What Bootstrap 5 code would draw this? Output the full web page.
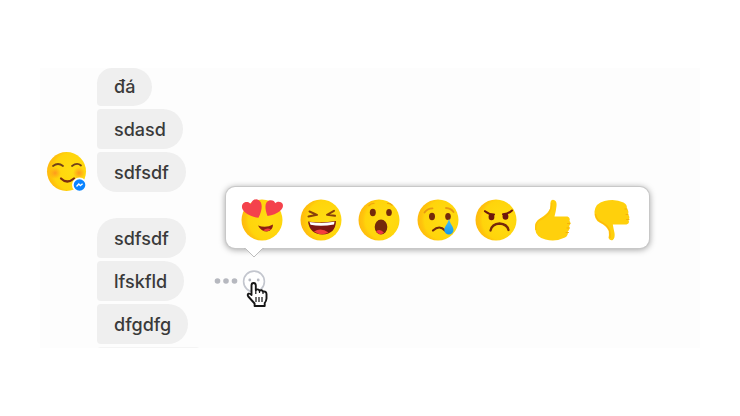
<!DOCTYPE html>
<html lang="vi">
<head>
<meta charset="utf-8">
<meta name="viewport" content="width=device-width, initial-scale=1">
<title>Messages</title>
<link href="https://cdn.jsdelivr.net/npm/bootstrap@5.3.0/dist/css/bootstrap.min.css" rel="stylesheet">
<style>
body { background: #fff; font-family: Inter, "Liberation Sans", sans-serif; }
.page { padding: 68px 40px; }
.chat { background: #fdfdfd; overflow: hidden; height: calc(100vh - 136px); min-height: 280px; }
.thread { gap: 26px; }
.group { gap: 7px; padding-left: 6px; }
.who { width: 44px; }
.avatar { width: 44px; height: 40px; overflow: visible; }
.msgs { gap: 3px; }
.bubble { height: 40px; padding: 0 17px; background: #efefef; color: #3a3a3a; font-size: 18px; font-weight: 500; line-height: 41px; border-radius: 4px 20px 20px 4px; }
.bubble.first { border-top-left-radius: 20px; }
.bubble.last { border-bottom-left-radius: 20px; }
.bubble.cut { height: 38px; line-height: 38px; border-radius: 16px 20px 20px 4px; }
.bubble.next { width: 103px; background: #f4f4f4; border-radius: 4px; }
.actions { gap: 4px; margin-left: 30px; }
.tool { border: 0; padding: 0; background: none; display: block; line-height: 0; }
.tool svg { display: block; overflow: visible; }
.picker { left: -16px; bottom: calc(100% + 21px); width: 423px; height: 61px; padding: 4px 15px 0; background: #fff; border-radius: 9px; box-shadow: 0 0 0 1px #c8c8c8, 0 1px 6px 1px rgba(0,0,0,.35); }
.tip { left: 18px; top: 100%; }
.hand { left: 4px; top: 12px; pointer-events: none; }
</style>
<script src="https://cdn.jsdelivr.net/npm/bootstrap@5.3.0/dist/js/bootstrap.bundle.min.js" defer></script>
</head>
<body>
<svg width="0" height="0" class="position-absolute" aria-hidden="true">
  <defs>
    <radialGradient id="face" cx=".66" cy=".5" r=".7">
      <stop offset="0" stop-color="#ffdd12"/><stop offset=".7" stop-color="#ffd40b"/><stop offset=".8" stop-color="#ffc40c"/><stop offset="1" stop-color="#ffb40e"/>
    </radialGradient>
    <linearGradient id="tear" x2="0" y2="1"><stop offset="0" stop-color="#4cc3f5"/><stop offset="1" stop-color="#1397ea"/></linearGradient>
    <radialGradient id="blush"><stop offset="0" stop-color="#ff9a1c"/><stop offset="1" stop-color="#ff9a1c" stop-opacity="0"/></radialGradient>
  </defs>
</svg>
<div class="page">
  <main class="chat">
    <div class="thread d-flex flex-column">
      <section class="group d-flex align-items-end">
        <div class="who">
          <svg class="avatar d-block" viewBox="0 0 44 40" role="img" aria-label="Contact">
            <circle cx="20.500" cy="19.500" r="19.500" fill="url(#face)"/>
            <circle cx="9" cy="21" r="6" fill="url(#blush)"/><circle cx="33" cy="21" r="6" fill="url(#blush)"/>
            <path d="M7 14q5-4 10 0M26 14q5-4 9-.5" fill="none" stroke="#70401a" stroke-width="1.800" stroke-linecap="round"/>
            <path d="M15 26.500q6 6 13 0" fill="none" stroke="#7c2c10" stroke-width="2.200" stroke-linecap="round"/>
            <circle cx="33.500" cy="33" r="7.500" fill="#fdfdfd"/><circle cx="33.500" cy="33" r="5.800" fill="#0a84ff"/>
            <path d="M30.500 34.500l2.300-2.500 1.600 1.600 2.200-1.900" fill="none" stroke="#fff" stroke-width="1.300"/>
          </svg>
        </div>
        <div class="msgs d-flex flex-column align-items-start">
          <div class="bubble cut">đá</div>
          <div class="bubble">sdasd</div>
          <div class="bubble last">sdfsdf</div>
        </div>
      </section>
      <section class="group d-flex align-items-end">
        <div class="who"></div>
        <div class="msgs d-flex flex-column align-items-start">
          <div class="bubble first">sdfsdf</div>
          <div class="d-flex align-items-center">
            <div class="bubble">lfskfld</div>
            <div class="actions d-flex align-items-center">
              <button class="tool" type="button" aria-label="More">
                <svg width="24" height="22" viewBox="0 0 24 22" fill="#b6b8bf"><circle cx="3.500" cy="11" r="2.800"/><circle cx="12" cy="11" r="2.800"/><circle cx="20.500" cy="11" r="2.800"/></svg>
              </button>
              <div class="position-relative">
                <button class="tool" type="button" aria-label="React" aria-expanded="true">
                  <svg width="24" height="24" viewBox="0 0 24 24"><circle cx="12" cy="12.500" r="10.400" fill="#fff" stroke="#c3c6ce" stroke-width="1.600"/><circle cx="7.800" cy="11" r="1.400" fill="#b4b7c0"/><circle cx="16.200" cy="11" r="1.400" fill="#b4b7c0"/></svg>
                </button>
                <svg class="hand position-absolute" width="23" height="27" viewBox="0 0 23 27" aria-hidden="true">
                  <path d="M5.500 14V4.500Q5.500 2 7.600 2T9.800 4.500V9Q12 7.400 13.500 9.600 16 8.400 17 10.600 20.300 10 20.500 13V17.500Q20.300 20 18.700 22V25H8.600V22.500L2.300 15.500Q1 13.500 2.600 12.700 4 12.200 5.500 14Z" fill="#fff" stroke="#161616" stroke-width="1.900" stroke-linejoin="round"/>
                  <path d="M9.800 9v4M13.500 10v2M17 11v2M10 16v5M13 16v5M16 16v5" stroke="#161616" stroke-width="1.200"/>
                </svg>
                <div class="picker position-absolute d-flex align-items-center justify-content-between" role="group" aria-label="Reactions">
                  <button class="tool" type="button" aria-label="Love">
                    <svg width="42" height="42" viewBox="0 0 42 42"><circle cx="21" cy="21" r="20.500" fill="url(#face)"/>
                      <g fill="#f4424c"><path d="M17.500 18.800C10 18 3 14 1.200 9.500 0 5 3.500 2 7.500 3.200L9.800 5C11 1 14.500-.6 17.500.9c4.500 2.600 4 9.500 0 17.900Z"/><path d="M26.500 17C24 10 23 3.500 28 1.400 31.500.5 33.500 2 34.200 4.200 36 2.200 40 2 41.700 5 43.500 10 37 15.500 26.500 17Z"/></g>
                      <path d="M17 26.500Q25 29.500 32 25.500 32 31.500 26 32.500 20 32.500 17 26.500Z" fill="#8b1f13"/><path d="M22 31.500q4-3.500 8-1.200-3 3-8 1.200Z" fill="#ef3d3b"/></svg>
                  </button>
                  <button class="tool" type="button" aria-label="Haha">
                    <svg width="42" height="42" viewBox="0 0 42 42"><circle cx="21" cy="21" r="20.500" fill="url(#face)"/>
                      <path d="M9.500 12.500l7.500 3.300-8.500 1.800M34 11.800l-7 4 8 1" fill="none" stroke="#87410b" stroke-width="2" stroke-linecap="round" stroke-linejoin="round"/>
                      <path d="M8 22.500Q21 24.500 36 22 35.500 35 22.500 35.500 9.500 35 8 22.500Z" fill="#7d1712"/><path d="M9.500 23Q22 25 34.500 22.800L34 25.500Q21 28 10.500 25.800Z" fill="#fff"/><path d="M14 32.500q7-4.500 14.500 1-7 4-14.500-1Z" fill="#f5403d"/></svg>
                  </button>
                  <button class="tool" type="button" aria-label="Wow">
                    <svg width="42" height="42" viewBox="0 0 42 42"><circle cx="21" cy="21" r="20.500" fill="url(#face)"/>
                      <g fill="#74290b"><ellipse cx="14.800" cy="13.500" rx="3" ry="3.700"/><ellipse cx="31" cy="13.500" rx="2.800" ry="3.500"/><ellipse cx="23" cy="28" rx="6.300" ry="7.500"/></g>
                      <path d="M18 32.500q4-3.500 8 1.200-4 3.500-8-1.200Z" fill="#ef3545"/><path d="M10.500 7q3-3 6-2.500M29 4.500q3-.5 5.500 2" stroke="#f0a70b" stroke-width="1.200" fill="none"/></svg>
                  </button>
                  <button class="tool" type="button" aria-label="Sad">
                    <svg width="42" height="42" viewBox="0 0 42 42"><circle cx="21" cy="21" r="20.500" fill="url(#face)"/>
                      <path d="M7.500 13.500q2.500-4 8-4.200M29 9q5 .3 7.500 4" stroke="#e59812" stroke-width="1.800" fill="none" stroke-linecap="round"/>
                      <ellipse cx="15" cy="17.500" rx="3" ry="3.700" fill="#74290b"/><ellipse cx="31" cy="17.500" rx="2.800" ry="3.500" fill="#74290b"/>
                      <path d="M16 31.500q6.500-6 12 0" fill="none" stroke="#74290b" stroke-width="2.200" stroke-linecap="round"/><path d="M32 19.500C33 25 36.500 27.500 36.500 31a4.500 4.500 0 0 1-9.200 0C27.300 27.500 31 25 32 19.500Z" fill="url(#tear)"/></svg>
                  </button>
                  <button class="tool" type="button" aria-label="Angry">
                    <svg width="42" height="42" viewBox="0 0 42 42"><circle cx="21" cy="21" r="20.500" fill="url(#face)"/>
                      <ellipse cx="16.500" cy="18" rx="2.900" ry="3.200" fill="#6d170d"/><ellipse cx="30.500" cy="17.500" rx="2.900" ry="3.200" fill="#6d170d"/><path d="M10 12.200Q14 15.500 19 15.500M37 11.500Q33.500 15 28 15.200" stroke="#6d170d" stroke-width="2.100" fill="none" stroke-linecap="round"/>
                      <path d="M15.500 31.500Q17 25 24.500 24.500 32 25 33.500 31" fill="none" stroke="#74290b" stroke-width="2.300" stroke-linecap="round"/></svg>
                  </button>
                  <button class="tool" type="button" aria-label="Like">
                    <svg width="42" height="42" viewBox="0 0 42 42"><path d="M16.500 3Q17.500 0 20.500 1.200 23 2.500 22.500 7 22 12 20.500 17.500H33.500Q36.500 18.500 35.500 22 37.500 24 35.200 27 36 30.500 33.800 32.500 34.500 36.500 31 38.500 22 43 11.500 40.500 2 38.500 1 29.500.5 22.500 6 19.500 13 15.500 16 10 17 6 16.500 3Z" fill="#ffd00c"/><path d="M17.500 4Q18 9 15 14 10 19.500 5.500 21 1 24 2 31" fill="none" stroke="#ffc20a" stroke-width="1.500"/><path d="M33.500 24.500h2.500M33 29h2.500M32 33.500h2.500" stroke="#f5af08" fill="none" stroke-linecap="round"/></svg>
                  </button>
                  <button class="tool" type="button" aria-label="Dislike">
                    <svg width="42" height="42" viewBox="0 0 42 42"><path d="M16.500 39Q18 42 20.800 41 23.300 39 22.500 34 21.500 29.500 20.800 25.500H34.500Q38 24.500 36.500 21 38.500 18 36 15.500 37.200 12 34.800 9.500 35.500 5.500 31.500 3.500 23-.8 12.500 2 3.500 4 2.500 12.500 2 20.500 7.500 23.500 14.500 26.500 16.700 32 17.300 36 16.500 39Z" fill="#ffd00c"/><path d="M3.500 15q1 6 6 8.200 6 3 8 7.800 1 4 .5 8" fill="none" stroke="#ffb50a" stroke-width="1.200"/><path d="M34.500 20.500h2.500M34 15.500h2M33 10h2" stroke="#f5af08" fill="none" stroke-linecap="round"/></svg>
                  </button>
                  <svg class="tip position-absolute" width="20" height="10" viewBox="0 0 20 10" aria-hidden="true"><path d="M0-1L10 9 20-1Z" fill="#fff"/><path d="M0 .5h1.500L10 9l8.500-8.500H20" fill="none" stroke="#bdbdbd"/></svg>
                </div>
              </div>
            </div>
          </div>
          <div class="bubble">dfgdfg</div>
          <div class="bubble next"></div>
        </div>
      </section>
    </div>
  </main>
</div>
</body>
</html>
